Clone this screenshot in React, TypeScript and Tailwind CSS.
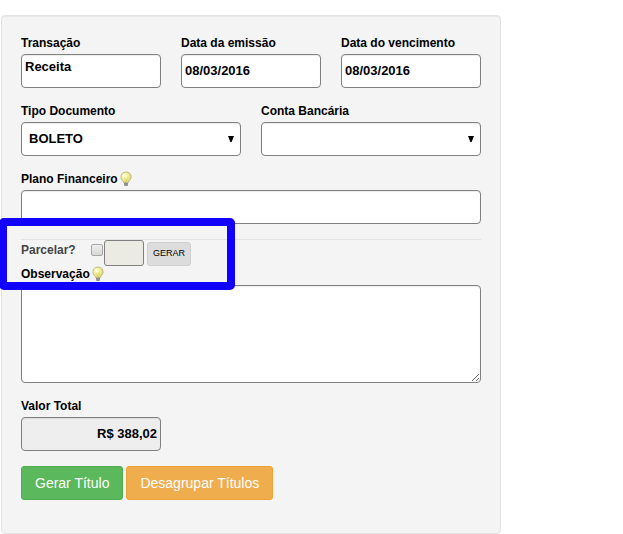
import { useState, type ReactNode } from "react";
import clsx from "clsx";

const FIELD =
  "block h-[34px] w-full rounded border border-[#808080] px-[3px] text-[13px] font-bold text-black shadow-[inset_0_1px_1px_rgba(0,0,0,0.08)] outline-none";

const LABEL = "flex h-4 items-center text-xs font-bold text-black";

function Bulb() {
  return (
    <svg viewBox="0 0 12 16" className="ml-0.5 h-4 w-3 shrink-0" aria-hidden="true">
      <defs>
        <radialGradient id="glass" cx="0.35" cy="0.35" r="0.75">
          <stop offset="0" stopColor="#fffff0" />
          <stop offset="0.35" stopColor="#f6f4a4" />
          <stop offset="1" stopColor="#d9d268" />
        </radialGradient>
      </defs>
      <path
        d="M6 1C3 1 .9 3.1.9 5.8c0 1.8 1 3 1.9 4.1.6.7.9 1.3 1 2h4.4c.1-.7.4-1.3 1-2 .9-1.1 1.9-2.3 1.9-4.1C11.1 3.1 9 1 6 1z"
        fill="url(#glass)"
        stroke="#b5ae74"
        strokeWidth="0.8"
      />
      <path d="M4.6 6.5 5.5 11M7.4 6.5 6.5 11" stroke="#c9bd52" strokeWidth="0.5" />
      <path d="M4 11.5h4v2.7L7.2 15H4.8L4 14.2z" fill="#a9a9a4" />
      <path d="M4 12.7h4M4.2 14.1h3.6" stroke="#6f6f6a" strokeWidth="0.6" />
    </svg>
  );
}

function Field({
  id,
  label,
  hint,
  className,
  children,
}: {
  id: string;
  label: string;
  hint?: boolean;
  className?: string;
  children: ReactNode;
}) {
  return (
    <div className={clsx("min-w-0", className)}>
      <label htmlFor={id} className={clsx(LABEL, "mb-[3px]")}>
        {label}
        {hint && <Bulb />}
      </label>
      {children}
    </div>
  );
}

function Select({ id, options }: { id: string; options: string[] }) {
  return (
    <div className="relative">
      <select id={id} className={clsx(FIELD, "appearance-none bg-white pl-[7px]")}>
        {options.map((o) => (
          <option key={o}>{o}</option>
        ))}
      </select>
      <svg
        viewBox="0 0 6 6"
        className="pointer-events-none absolute top-3.5 right-[7px] size-[6px]"
        aria-hidden="true"
      >
        <path d="M0 0h6L3.6 6H2.4z" fill="#000" />
      </svg>
    </div>
  );
}

export default function App() {
  const [split, setSplit] = useState(false);

  return (
    <main className="bg-white pt-[15px] pl-px font-['Liberation_Sans',Arial,sans-serif]">
      <form
        className="w-full max-w-[500px] rounded border border-[#e3e3e3] bg-[#f4f4f4] px-[19px] pt-[19px] pb-[33px] shadow-[inset_0_1px_1px_rgba(0,0,0,0.05)]"
        onSubmit={(e) => e.preventDefault()}
      >
        <div className="grid grid-cols-3 gap-5">
          <Field id="transacao" label="Transação">
            <textarea
              id="transacao"
              defaultValue="Receita"
              className={clsx(FIELD, "resize-none overflow-hidden bg-white pt-1 leading-4")}
            />
          </Field>
          <Field id="emissao" label="Data da emissão">
            <input id="emissao" defaultValue="08/03/2016" className={clsx(FIELD, "bg-white pb-0.5")} />
          </Field>
          <Field id="vencimento" label="Data do vencimento">
            <input id="vencimento" defaultValue="08/03/2016" className={clsx(FIELD, "bg-white pb-0.5")} />
          </Field>
        </div>

        <div className="mt-[15px] grid grid-cols-2 gap-5">
          <Field id="tipo" label="Tipo Documento">
            <Select id="tipo" options={["BOLETO"]} />
          </Field>
          <Field id="conta" label="Conta Bancária">
            <Select id="conta" options={[""]} />
          </Field>
        </div>

        <Field id="plano" label="Plano Financeiro" hint className="mt-[15px]">
          <input id="plano" className={clsx(FIELD, "bg-white pb-0.5")} />
        </Field>

        <div className="relative mt-[15px]">
          <div className="flex items-start border-t border-[#e3e3e3]">
            <label htmlFor="parcelar" className="mt-0.5 w-[70px] text-xs leading-4 font-bold text-[#444]">
              Parcelar?
            </label>
            <input
              id="parcelar"
              type="checkbox"
              checked={split}
              onChange={(e) => setSplit(e.target.checked)}
              className="mt-1 size-3 appearance-none rounded-xs border border-[#a6a6a6] bg-linear-to-b from-[#eeeeee] to-[#d8d8d8] checked:from-[#999] checked:to-[#777]"
            />
            <input
              aria-label="Número de parcelas"
              disabled={!split}
              className="ml-px h-[26px] w-10 rounded-[3px] border border-[#808080] bg-[#ebebe4] px-1 text-[13px]"
            />
            <button
              type="button"
              className="mt-0.5 ml-[3px] h-6 rounded-[3px] border border-[#d0d0d0] bg-[#dcdcdc] px-[5px] text-[9px] text-black"
            >
              GERAR
            </button>
          </div>

          {/* highlight frame around the instalment controls */}
          <div className="pointer-events-none absolute -top-[21px] -left-[22px] h-[72px] w-[236px] rounded-[5px] border-8 border-[#1200ff]" />
        </div>

        <Field id="observacao" label="Observação" hint>
          <textarea id="observacao" className={clsx(FIELD, "h-[98px] resize bg-white")} />
        </Field>

        <Field id="valor" label="Valor Total" className="mt-[15px] w-[140px]">
          <input
            id="valor"
            readOnly
            defaultValue="R$ 388,02"
            className={clsx(FIELD, "bg-[#eeeeee] pb-0.5 text-right")}
          />
        </Field>

        <div className="mt-[15px] flex gap-[3px]">
          <button
            type="submit"
            className="h-[34px] rounded-[3px] border border-[#4cae4c] bg-[#5cb85c] px-[13px] text-sm text-white"
          >
            Gerar Título
          </button>
          <button
            type="button"
            className="h-[34px] rounded-[3px] border border-[#eea236] bg-[#f0ad4e] px-[13px] text-sm text-white"
          >
            Desagrupar Títulos
          </button>
        </div>
      </form>
    </main>
  );
}
